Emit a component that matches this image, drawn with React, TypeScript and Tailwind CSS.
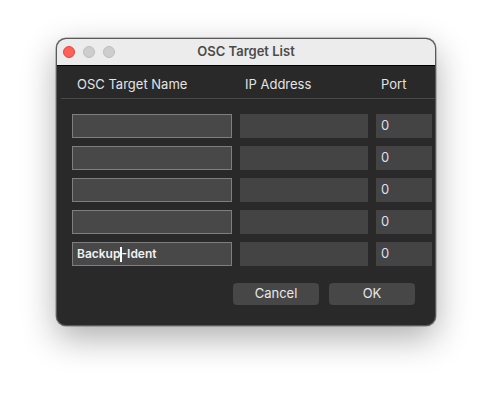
export default function App() {
  const rows = ["", "", "", "", "Backup-Ident"];

  return (
    <div
      className="w-[492px] h-[400px] bg-white pl-[56px] pt-[38px]"
      style={{ fontFamily: 'Inter, "Liberation Sans", Arial, sans-serif' }}
    >
      <div className="w-[380px] h-[288px] rounded-[10px] overflow-hidden bg-[#292929] border border-[#5a5a5a] shadow-[0_12px_34px_rgba(0,0,0,0.32),0_0_0_0.5px_rgba(0,0,0,0.4)] flex flex-col">
        {/* title bar */}
        <div className="h-[27px] shrink-0 bg-[#ececec] border-b border-black flex items-center relative">
          <div className="flex gap-[8px] pl-[6px]">
            <span className="w-[12px] h-[12px] rounded-full bg-[#fe5f57] border border-[#e2463f]" />
            <span className="w-[12px] h-[12px] rounded-full bg-[#cdcdcd] border border-[#bdbdbd]" />
            <span className="w-[12px] h-[12px] rounded-full bg-[#cdcdcd] border border-[#bdbdbd]" />
          </div>
          <div className="absolute inset-0 flex items-center justify-center text-[13px] font-semibold text-[#4b4b4b]">
            OSC Target List
          </div>
        </div>

        {/* column header */}
        <div className="h-[32px] shrink-0 flex items-center text-[13px] text-[#e4e4e4] pl-[20px] pt-[5px]">
          <div className="w-[168px]">OSC Target Name</div>
          <div className="w-[136px]">IP Address</div>
          <div>Port</div>
        </div>
        <div className="ml-[4px] h-px bg-[#4a4a4a]" />

        {/* rows */}
        <div className="flex flex-col gap-[8px] pt-[15px] pl-[15px]">
          {rows.map((name, i) => (
            <div key={i} className="flex gap-[8px] h-[24px]">
              <div className="w-[160px] bg-[#484848] border border-[#7e7e7e] flex items-center pl-[4px] text-[12px] font-semibold text-[#f2f2f2]">
                {name ? (
                  <>
                    <span>Backup</span>
                    <span className="w-[2px] h-[15px] bg-white" />
                    <span className="-ml-[1px]">-Ident</span>
                  </>
                ) : null}
              </div>
              <div className="w-[128px] bg-[#444444]" />
              <div className="w-[56px] bg-[#444444] flex items-center pl-[5px] text-[13px] text-[#dedef2]">
                0
              </div>
            </div>
          ))}
        </div>

        {/* buttons */}
        <div className="flex justify-end gap-[10px] pt-[17px] pr-[20px]">
          <button className="w-[86px] h-[22px] rounded-[4px] bg-[#474747] text-[13px] text-[#e8e8e8]">
            Cancel
          </button>
          <button className="w-[86px] h-[22px] rounded-[4px] bg-[#474747] text-[13px] text-[#e8e8e8]">
            OK
          </button>
        </div>
      </div>
    </div>
  );
}
